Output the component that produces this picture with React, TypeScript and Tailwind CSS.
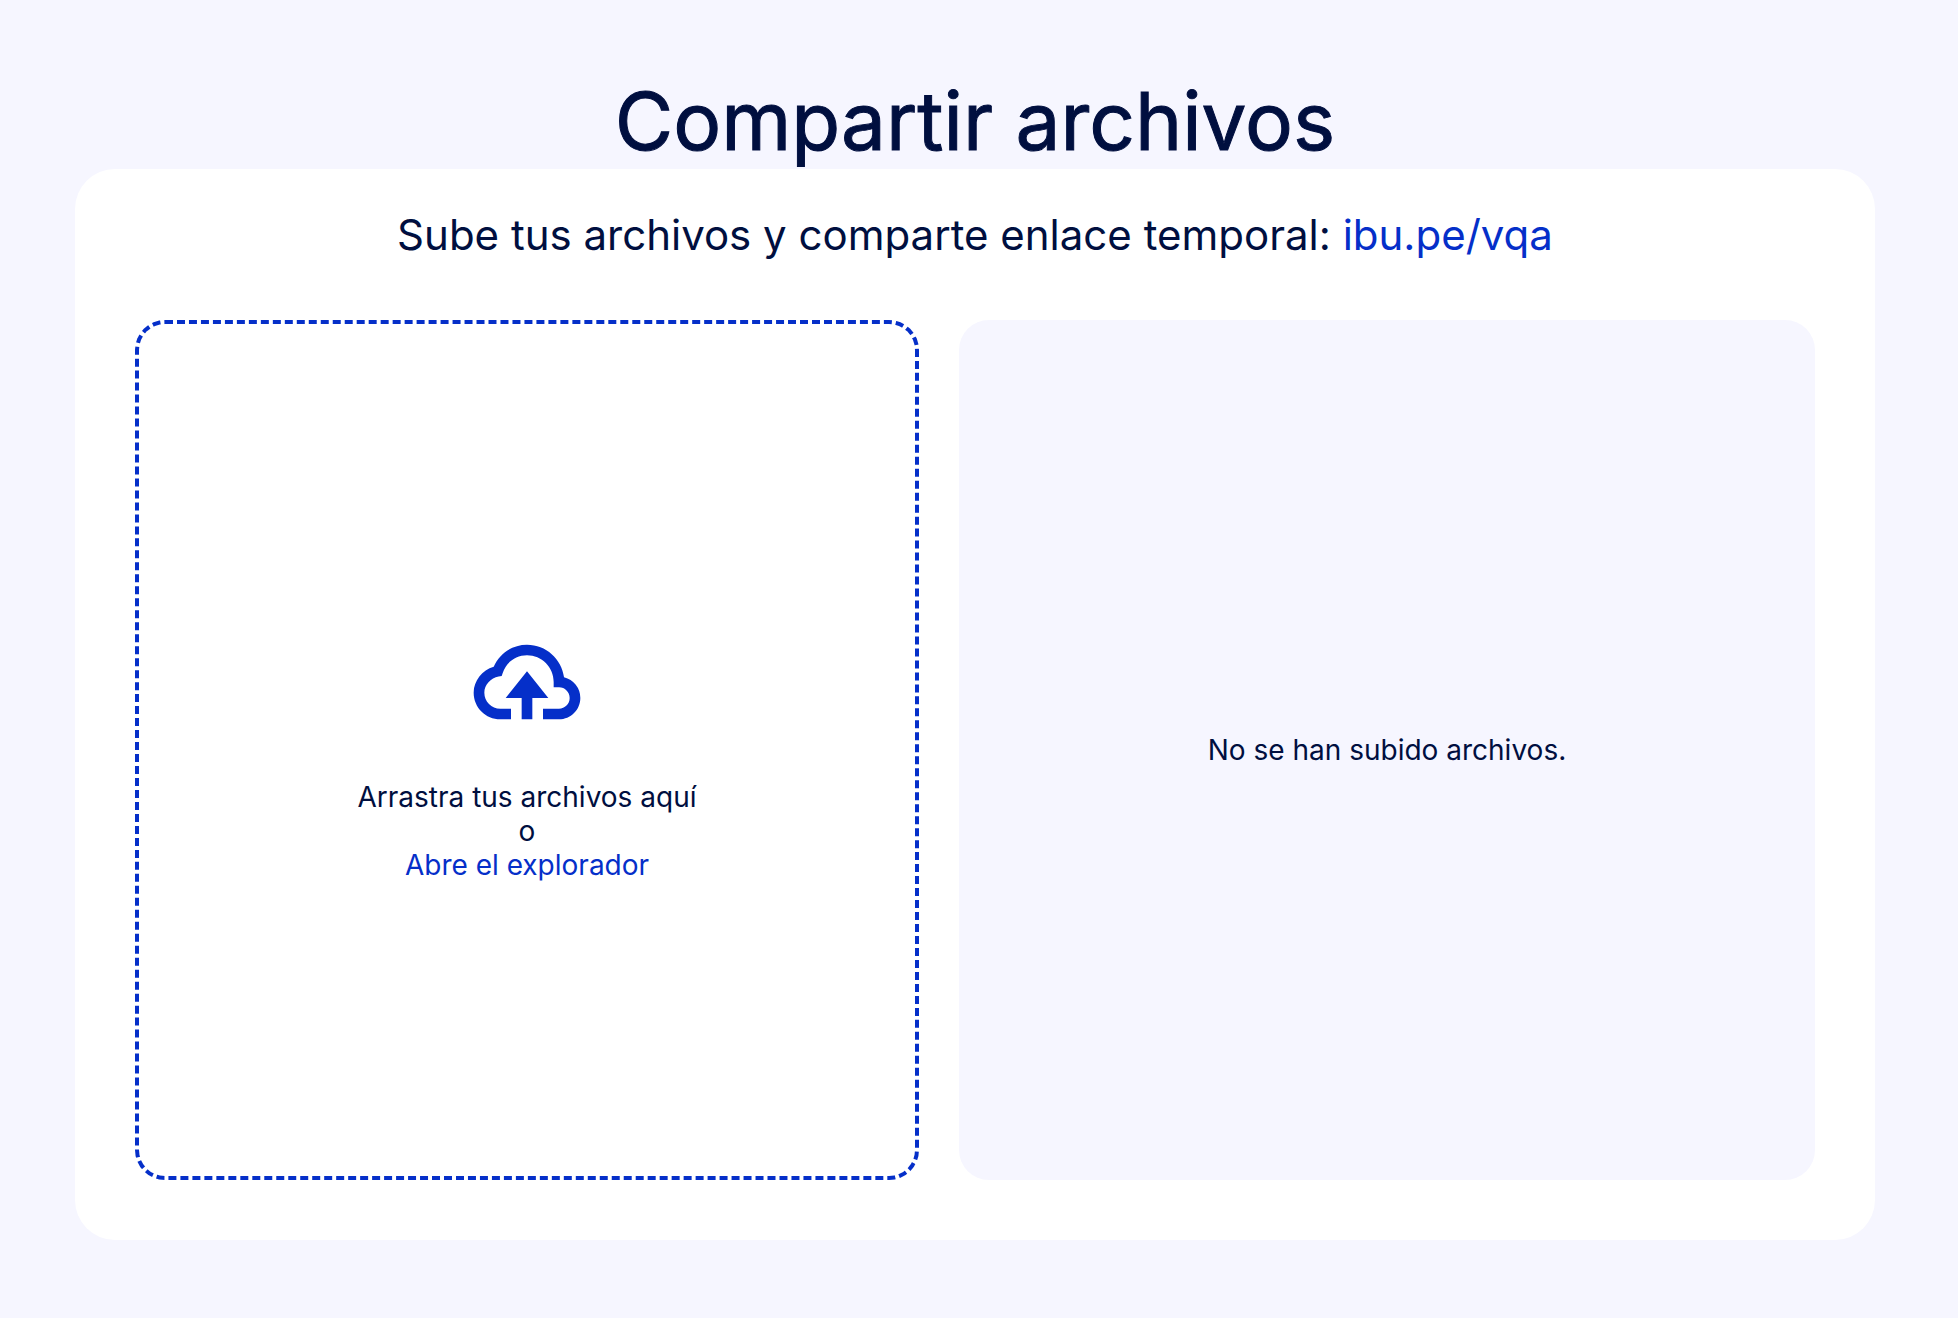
import React from "react";

export default function App() {
  return (
    <div className="min-h-screen bg-[#f6f6ff] pt-[74px] pr-[83px] pb-[78px] pl-[75px] font-['Inter',sans-serif] text-[#000f3f]">
      <h1 className="pb-px text-center text-[80px] leading-[94px] font-normal [-webkit-text-stroke:1px_#000f3f]">Compartir archivos</h1>
      <main className="rounded-[40px] bg-white px-[60px] pt-[40px] pb-[60px]">
        <p className="text-center text-[42px] leading-[51px]">
          Sube tus archivos y comparte enlace temporal:{" "}
          <a href="#enlace" className="text-[#052fc9]">ibu.pe/vqa</a>
        </p>
        <div className="mt-[60px] grid min-h-[860px] grid-cols-[784fr_856fr] gap-10">
          <section className="flex flex-col items-center justify-center rounded-[30px] border-4 border-dashed border-[#052fc9] text-center text-[28px] leading-[34px]">
            <svg viewBox="0 0 24 24" className="mb-[34px] w-32 fill-[#052fc9]" aria-hidden="true">
              <path d="M13 19v-4h3l-4-5-4 5h3v4z" />
              <path d="M7 19h2v-2H7c-1.654 0-3-1.346-3-3 0-1.404 1.199-2.756 2.673-3.015l.581-.102.192-.558C8.149 8.274 9.895 7 12 7c2.757 0 5 2.243 5 5v1h1c1.103 0 2 .897 2 2s-.897 2-2 2h-3v2h3c2.206 0 4-1.794 4-4a4.01 4.01 0 0 0-3.056-3.888C18.507 7.67 15.56 5 12 5 9.244 5 6.85 6.611 5.757 9.15 3.609 9.792 2 11.82 2 14c0 2.757 2.243 5 5 5z" />
            </svg>
            <p>Arrastra tus archivos aquí</p>
            <p>o</p>
            <button type="button" className="cursor-pointer text-[#052fc9]">Abre el explorador</button>
          </section>
          <section className="flex items-center justify-center rounded-[30px] bg-[#f6f6ff] text-[28px] leading-[34px]">
            <p>No se han subido archivos.</p>
          </section>
        </div>
      </main>
    </div>
  );
}
